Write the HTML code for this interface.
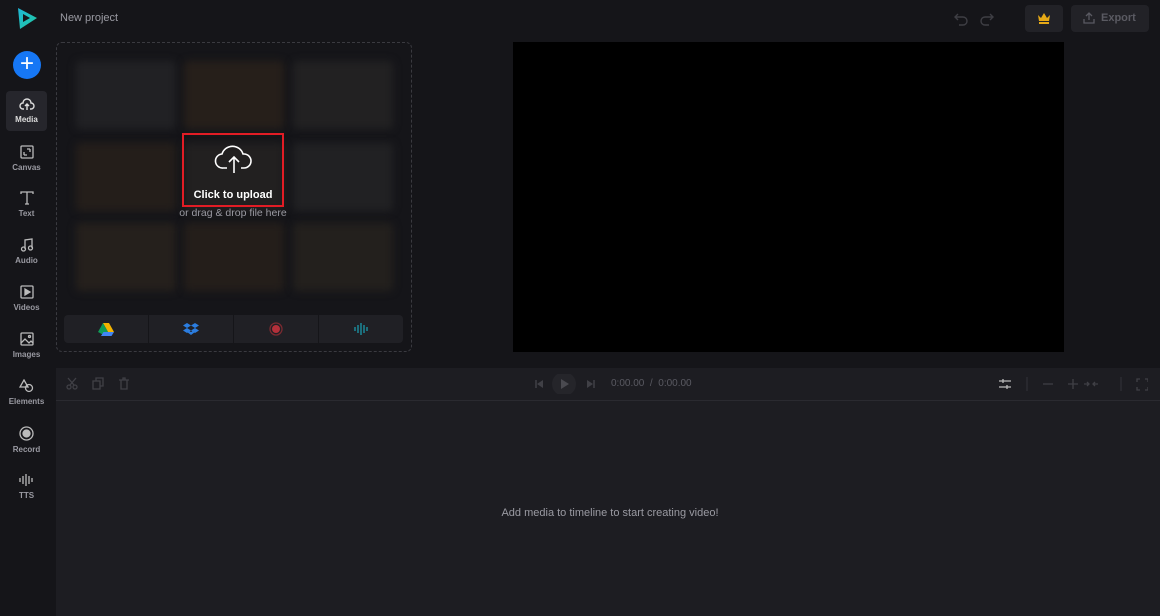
<!DOCTYPE html><html><head><style>
*{margin:0;padding:0;box-sizing:border-box}
body{width:1160px;height:616px;background:#151519;font-family:"Liberation Sans",sans-serif;position:relative;overflow:hidden;color:#ccc}
.a{position:absolute}
.nav{left:6px;width:41px;height:62px;text-align:center;font-size:8px;font-weight:bold;color:#9a9aa2}
.nav svg{display:block;margin:0 auto 4px}
.th{position:absolute;width:100px;height:68px;border-radius:4px;filter:blur(4px)}
</style></head><body>
<svg class="a" style="left:16px;top:7px" width="22" height="23" viewBox="0 0 22 23"><defs><linearGradient id="g" x1="0" y1="0" x2="1" y2="1"><stop offset="0" stop-color="#1fb5d6"/><stop offset="1" stop-color="#20c9a0"/></linearGradient></defs><path d="M2 1 L21 11 L4 22 Z" fill="url(#g)"/><path d="M7 7 L14 11 L7 15Z" fill="#151519"/></svg>
<div class="a" style="left:60px;top:12px;font-size:11px;color:#9a9aa2">New project</div>
<div class="a" style="left:13px;top:51px;width:28px;height:28px;border-radius:50%;background:#1677f5;color:#fff;font-size:24px;line-height:26px;text-align:center">+</div>
<div class="a nav" style="top:91px;height:40px;background:#26262c;border-radius:4px;padding-top:6px;color:#ddd"><svg width="16" height="14" viewBox="0 0 16 14" fill="none" stroke="#ddd" stroke-width="1.4"><path d="M5 12H4a3 3 0 0 1 0-6 4 4 0 0 1 8 0 3 3 0 0 1 0 6h-1M8 13V7M6 9l2-2 2 2"/></svg>Media</div>
<div class="a nav" style="top:145px"><svg width="14" height="14" viewBox="0 0 14 14" fill="none" stroke="#bbb" stroke-width="1.3"><rect x="1" y="1" width="12" height="12" rx="1"/><path d="M4 10V7M4 10h3M10 4v3M10 4H7"/></svg>Canvas</div>
<div class="a nav" style="top:191px"><svg width="14" height="14" viewBox="0 0 14 14" fill="none" stroke="#bbb" stroke-width="1.3"><path d="M1 3V1h12v2M7 1v12M5 13h4"/></svg>Text</div>
<div class="a nav" style="top:238px"><svg width="14" height="14" viewBox="0 0 14 14" fill="none" stroke="#bbb" stroke-width="1.3"><path d="M5 11V2l7-1v9"/><circle cx="3.5" cy="11" r="2"/><circle cx="10.5" cy="10" r="2"/></svg>Audio</div>
<div class="a nav" style="top:285px"><svg width="14" height="14" viewBox="0 0 14 14" fill="none" stroke="#bbb" stroke-width="1.3"><rect x="1" y="1" width="12" height="12" rx="1"/><path d="M5 4l5 3-5 3z" fill="#bbb"/></svg>Videos</div>
<div class="a nav" style="top:332px"><svg width="14" height="14" viewBox="0 0 14 14" fill="none" stroke="#bbb" stroke-width="1.3"><rect x="1" y="1" width="12" height="12" rx="1"/><path d="M1 11l4-4 4 4 2-2 2 2"/><circle cx="9.5" cy="4.5" r="1"/></svg>Images</div>
<div class="a nav" style="top:379px"><svg width="16" height="14" viewBox="0 0 16 14" fill="none" stroke="#bbb" stroke-width="1.3"><path d="M5 1l4 7H1z"/><circle cx="10" cy="9" r="3.5"/></svg>Elements</div>
<div class="a nav" style="top:426px"><svg width="15" height="15" viewBox="0 0 15 15" fill="none" stroke="#bbb" stroke-width="1.3"><circle cx="7.5" cy="7.5" r="6.5"/><circle cx="7.5" cy="7.5" r="3.5" fill="#bbb"/></svg>Record</div>
<div class="a nav" style="top:473px"><svg width="16" height="14" viewBox="0 0 16 14" stroke="#bbb" stroke-width="1.3"><path d="M1 5v4M4 3v8M7 1v12M10 3v8M13 5v4"/></svg>TTS</div>
<!-- media panel -->
<div class="a" style="left:56px;top:42px;width:356px;height:310px;border:1px dashed #3a3a40;border-radius:6px;overflow:hidden">
<div class="th" style="left:19px;top:18px;background:#212124"></div>
<div class="th" style="left:127px;top:18px;background:#261f1a"></div>
<div class="th" style="left:236px;top:18px;background:#222122"></div>
<div class="th" style="left:19px;top:100px;background:#241e1a"></div>
<div class="th" style="left:127px;top:100px;background:#222020"></div>
<div class="th" style="left:236px;top:100px;background:#212123"></div>
<div class="th" style="left:19px;top:180px;background:#25201c"></div>
<div class="th" style="left:127px;top:180px;background:#241e1a"></div>
<div class="th" style="left:236px;top:180px;background:#23201d"></div>
<div class="a" style="left:7px;top:272px;width:339px;height:28px;background:#202025;border-radius:4px;display:flex">
<div style="flex:1;border-right:1px solid #151519;display:flex;align-items:center;justify-content:center"><svg width="16" height="14" viewBox="0 0 16 14"><path d="M5 1h6l5 9h-6z" fill="#f4b400"/><path d="M5 1l5 9-2.5 4L0 10z" fill="#0f9d58"/><path d="M3 14l2.5-4H16l-2.5 4z" fill="#4285f4"/></svg></div>
<div style="flex:1;border-right:1px solid #151519;display:flex;align-items:center;justify-content:center"><svg width="16" height="14" viewBox="0 0 16 14" fill="#2b7de0"><path d="M4 1l4 2.5-4 2.5-4-2.5zM12 1l4 2.5-4 2.5-4-2.5zM4 6l4 2.5-4 2.5-4-2.5zM12 6l4 2.5-4 2.5-4-2.5zM8 10l4-2 0 2-4 3-4-3v-2z"/></svg></div>
<div style="flex:1;border-right:1px solid #151519;display:flex;align-items:center;justify-content:center"><svg width="14" height="14"><circle cx="7" cy="7" r="6" fill="none" stroke="#7a2a30" stroke-width="1.3"/><circle cx="7" cy="7" r="4" fill="#b3303a"/></svg></div>
<div style="flex:1;display:flex;align-items:center;justify-content:center"><svg width="16" height="12" stroke="#1a8fa0" stroke-width="1.4"><path d="M2 4v4M5 2v8M8 0v12M11 2v8M14 4v4"/></svg></div>
</div></div>
<div class="a" style="left:182px;top:133px;width:102px;height:74px;border:2px solid #e21c25"></div>
<svg class="a" style="left:214px;top:141px" width="40" height="32" viewBox="0 0 40 32" fill="none" stroke="#fff" stroke-width="1.6"><path d="M13 27H9a7 7 0 0 1-1-14 11 11 0 0 1 21 0h1a7 7 0 0 1 0 14h-3"/><path d="M20 32V16M15 21l5-5 5 5"/></svg>
<div class="a" style="left:182px;top:189px;width:102px;text-align:center;font-size:11px;font-weight:bold;color:#fff">Click to upload</div>
<div class="a" style="left:150px;top:207px;width:166px;text-align:center;font-size:10.5px;color:#9a9aa2">or drag &amp; drop file here</div>
<!-- preview -->
<div class="a" style="left:513px;top:42px;width:551px;height:310px;background:#000"></div>
<!-- top right -->
<svg class="a" style="left:954px;top:12px" width="40" height="14" fill="none" stroke="#3e3e44" stroke-width="1.4"><path d="M4 2L1 5l3 3M1 5h8a4 4 0 0 1 0 8H5M36 2l3 3-3 3M39 5h-8a4 4 0 0 0 0 8h4"/></svg>
<div class="a" style="left:1025px;top:5px;width:38px;height:27px;background:#222227;border-radius:4px"></div>
<svg class="a" style="left:1037px;top:12px" width="14" height="12"><path d="M1 3l3 3 3-5 3 5 3-3-1 6H2z" fill="#e6a916"/><rect x="2" y="10" width="10" height="2" fill="#e6a916"/></svg>
<div class="a" style="left:1071px;top:5px;width:78px;height:27px;background:#222227;border-radius:4px;font-size:11px;color:#5a5a62;font-weight:bold;line-height:27px;padding-left:30px">Export</div>
<svg class="a" style="left:1083px;top:12px" width="12" height="12" fill="none" stroke="#5a5a62" stroke-width="1.3"><path d="M6 8V1M3 4l3-3 3 3M1 7v4h10V7"/></svg>
<!-- timeline -->
<div class="a" style="left:56px;top:368px;width:1104px;height:248px;background:#1d1d22"></div>
<div class="a" style="left:56px;top:400px;width:1104px;height:1px;background:#2a2a30"></div>
<svg class="a" style="left:66px;top:377px" width="66" height="13" fill="none" stroke="#404046" stroke-width="1.3"><circle cx="3" cy="10" r="2"/><circle cx="9" cy="10" r="2"/><path d="M4 8l6-7M8 8L2 1"/><rect x="27" y="4" width="7" height="8"/><path d="M30 4V1h7v8h-3"/><path d="M53 3h10M55 3v9h6V3M57 3V1h2v2"/></svg>
<svg class="a" style="left:533px;top:374px" width="65" height="20"><path d="M3 6v8" stroke="#404046" stroke-width="1.5"/><path d="M10 6l-6 4 6 4z" fill="#404046"/><circle cx="31" cy="10" r="12" fill="#25252a"/><path d="M28 5l8 5-8 5z" fill="#4a4a50"/><path d="M61 6v8" stroke="#404046" stroke-width="1.5"/><path d="M54 6l6 4-6 4z" fill="#404046"/></svg>
<div class="a" style="left:611px;top:378px;font-size:10px;color:#5a5a62">0:00.00&nbsp; / &nbsp;0:00.00</div>
<svg class="a" style="left:998px;top:376px" width="150" height="16" fill="none" stroke-width="1.3"><path d="M1 5h12M1 11h12M5 3v4M9 9v4" stroke="#bbb"/><path d="M29 1v14" stroke="#2f2f35"/><path d="M45 8h10M70 8h10M75 3v10M86 8h5M89 6l2 2-2 2M100 8h-5M97 6l-2 2 2 2" stroke="#404046"/><path d="M123 1v14" stroke="#2f2f35"/><path d="M139 6V3h3M147 3h3v3M150 11v3h-3M142 14h-3v-3" stroke="#404046"/></svg>
<div class="a" style="left:56px;top:507px;width:1108px;text-align:center;font-size:11px;color:#9a9aa2">Add media to timeline to start creating video!</div>
</body></html>
